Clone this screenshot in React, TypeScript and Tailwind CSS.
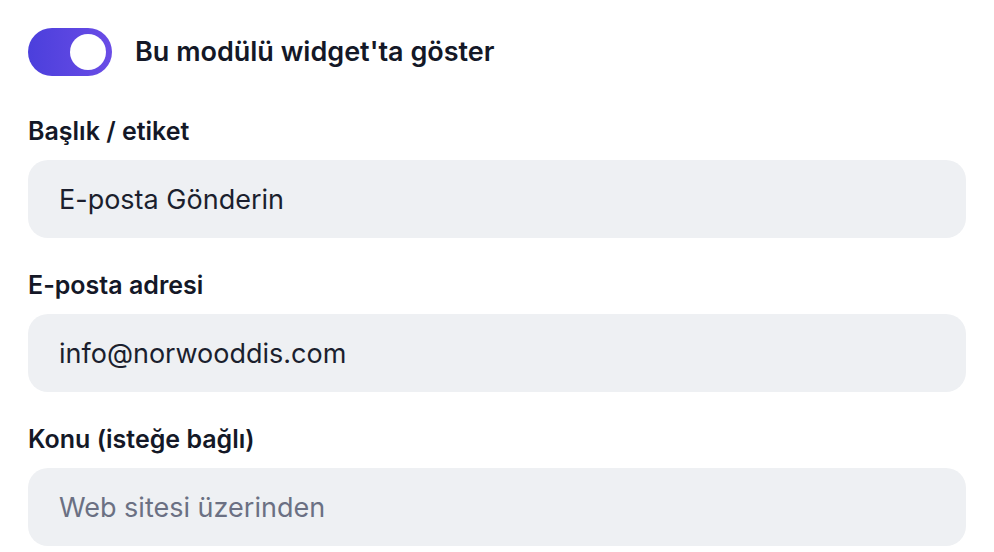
import { useState } from 'react';

interface FieldProps {
  label: string;
  value?: string;
  placeholder?: string;
}

const Field = ({ label, value, placeholder }: FieldProps) => {
  return (
    <div className="flex flex-col gap-[13px]">
      <label className="text-[25px] font-semibold leading-[32px] text-[#141827]">{label}</label>
      <input
        type="text"
        defaultValue={value}
        placeholder={placeholder}
        className="h-[78px] w-full rounded-[20px] bg-[#eef0f3] px-[31px] text-[27px] text-[#1b1f2e] outline-none placeholder:text-[#6b7083]"
      />
    </div>
  );
};

const App = () => {
  const [enabled, setEnabled] = useState(true);

  return (
    <div
      className="flex min-h-[552px] flex-col bg-white px-[28px] pt-[28px]"
      style={{ fontFamily: 'Inter, "Noto Sans", sans-serif' }}
    >
      {/* Widget toggle */}
      <div className="flex items-center gap-[23px]">
        <button
          type="button"
          onClick={() => setEnabled(!enabled)}
          className={`flex h-[48px] w-[84px] items-center rounded-full p-[6px] ${
            enabled ? 'justify-end bg-gradient-to-r from-[#4b3fdc] to-[#6a4ce6]' : 'justify-start bg-gray-300'
          }`}
        >
          <span className="size-[36px] rounded-full bg-white" />
        </button>
        <span className="text-[27px] font-semibold text-[#141827]">Bu modülü widget'ta göster</span>
      </div>

      {/* Fields */}
      <div className="mt-[39px] flex flex-col gap-[31px]">
        <Field label="Başlık / etiket" value="E-posta Gönderin" />
        <Field label="E-posta adresi" value="info@norwooddis.com" />
        <Field label="Konu (isteğe bağlı)" placeholder="Web sitesi üzerinden" />
      </div>
    </div>
  );
};

export default App;
